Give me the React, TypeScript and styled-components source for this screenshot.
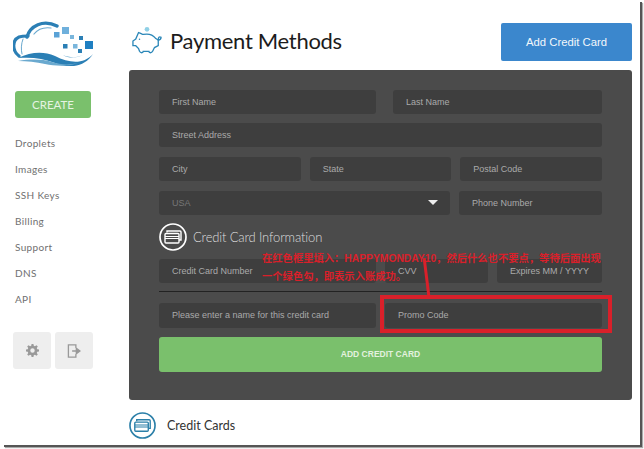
import React from 'react';
import styled, {createGlobalStyle} from 'styled-components';

const GlobalStyle = createGlobalStyle`
  html, body {
    margin: 0;
    padding: 0;
    background: #fff;
  }
`
const Page = styled.div`
  position: relative;
  width: 644px;
  height: 449px;
  overflow: hidden;
  background: #fff;
`
const Frame = styled.div`
  display: flex;
  width: 636px;
  height: 443px;
  margin: 2px 0 0 4px;
  background: #fff;
  border-right: 2px solid #555;
  border-bottom: 2px solid #555;
  box-shadow: 1px 1px 1px #aaa;
  overflow: hidden;
  font-family: "Lato", sans-serif;
`
const Sidebar = styled.aside`
  width: 125px;
  flex: none;
  display: flex;
  flex-direction: column;
  padding: 18px 0 0 9px;
  box-sizing: border-box;
`
const LogoMark = styled.svg`
  width: 82px;
  height: 46px;
  display: block;
`
const CreateButton = styled.div`
  width: 76px;
  height: 27.5px;
  margin: 24.5px 0 0 2px;
  border-radius: 3px;
  background: #7ac06c;
  color: #e6f3e2;
  font-size: 11.5px;
  line-height: 27.5px;
  text-align: center;
`
const Nav = styled.nav`
  display: flex;
  flex-direction: column;
  margin: 12px 0 0 2px;
`
const NavItem = styled.div`
  height: 26px;
  line-height: 26px;
  font-size: 10px;
  letter-spacing: 0.35px;
  color: #707070;
`
const ToolRow = styled.div`
  display: flex;
  gap: 4px;
  margin-top: 20px;
`
const ToolButton = styled.div`
  width: 38px;
  height: 37px;
  border-radius: 3px;
  background: #eee;
  color: #999;
  display: flex;
  align-items: center;
  justify-content: center;
`
const Main = styled.main`
  width: 503px;
  flex: none;
  display: flex;
  flex-direction: column;
`
const Header = styled.header`
  height: 68px;
  display: flex;
  align-items: flex-start;
  justify-content: space-between;
`
const TitleGroup = styled.div`
  display: flex;
  align-items: center;
  gap: 7px;
  margin: 22px 0 0 2px;
`
const Title = styled.h1`
  margin: 0;
  font-size: 22px;
  font-weight: 400;
  letter-spacing: -0.3px;
  line-height: 34px;
  color: #1c1c1c;
`
const AddButton = styled.div`
  width: 131px;
  height: 38px;
  margin-top: 21px;
  border-radius: 2px;
  background: #3b87cd;
  color: #f2f7fb;
  font-family: "Liberation Sans", sans-serif;
  font-size: 11.3px;
  line-height: 38px;
  text-align: center;
`
const Panel = styled.section`
  height: 330px;
  box-sizing: border-box;
  padding: 19.5px 30px 0;
  border-radius: 3px;
  background: #4b4b4b;
  display: flex;
  flex-direction: column;
`
const Row = styled.div<{$columns: string; $bottom: number; $gap?: number}>`
  display: grid;
  grid-template-columns: ${p => p.$columns};
  column-gap: ${p => p.$gap || 9}px;
  margin-bottom: ${p => p.$bottom}px;
`
const Field = styled.div<{$height?: number; $centered?: boolean; $muted?: boolean}>`
  height: ${p => p.$height || 24}px;
  line-height: ${p => p.$height || 24}px;
  padding-left: ${p => p.$centered ? 0 : 13}px;
  border-radius: 3px;
  background: #3e3e3e;
  color: ${p => p.$muted ? '#777' : '#aaa'};
  font-family: "Liberation Sans", sans-serif;
  font-size: 9px;
  text-align: ${p => p.$centered ? 'center' : 'left'};
`
const SelectField = styled(Field)`
  display: flex;
  align-items: center;
  justify-content: space-between;
  padding-right: 12px;
`
const Caret = styled.span`
  width: 0;
  height: 0;
  border-left: 5px solid transparent;
  border-right: 5px solid transparent;
  border-top: 5px solid #eee;
`
const SectionHead = styled.div`
  display: flex;
  align-items: center;
  gap: 6px;
  height: 28px;
  margin: 8.4px 0 8.5px;
  color: #ddd;
  font-size: 13px;
  font-weight: 300;
  letter-spacing: -0.15px;
`
const Divider = styled.div`
  height: 1px;
  background: #222;
  margin: 8px 0 10.5px;
`
const Submit = styled.div`
  height: 35px;
  margin-top: 9px;
  border-radius: 3px;
  background: #7ac06c;
  color: #e3f1df;
  font-family: "Liberation Sans", sans-serif;
  font-size: 8.5px;
  font-weight: 700;
  line-height: 35px;
  text-align: center;
`
const CardsHead = styled.div`
  display: flex;
  align-items: center;
  gap: 11px;
  margin-top: 12px;
  color: #333;
  font-size: 12.5px;
`
const RedBox = styled.div`
  position: absolute;
  left: 380px;
  top: 295px;
  width: 224px;
  height: 30px;
  border: 4px solid #d9202a;
`
const RedLine = styled.div`
  position: absolute;
  left: 425px;
  top: 258px;
  width: 3px;
  height: 38px;
  background: #d9202a;
  transform: rotate(-7deg);
`
const RedNote = styled.div`
  position: absolute;
  left: 262px;
  top: 250px;
  color: #d9202a;
  font-family: "Liberation Sans", "Noto Sans CJK SC", sans-serif;
  font-size: 10.3px;
  font-weight: 700;
  line-height: 18px;
  white-space: nowrap;
`

const Logo = () => (
    <LogoMark viewBox="0 0 82 46">
        <g fill="none" stroke="#2b7fb5" strokeLinecap="round">
            <path d="M6 36C-1 31 -1 20 6 17c3-1 6-1 9-1" strokeWidth="3.2"/>
            <path d="M14 17C17 6 30-1 44 6" strokeWidth="3.4"/>
            <path d="M21 14C25 9 31 7 38 8" strokeWidth="1.2" stroke="#6aa9cf"/>
            <path d="M10 19C8 24 8 30 9 34" strokeWidth="1" stroke="#6aa9cf"/>
        </g>
        <path d="M5 38c13-6 25-7 37-2 14 7 28 9 38-2-8 13-24 15-38 9-12-5-24-6-37-5z" fill="#2b7fb5"/>
        <path d="M5 41c12-2 24-2 34 1 9 3 18 3 26 1-11 4-23 3-33 1-9-2-18-3-27-3z" fill="#6aa9cf"/>
        <path d="M50 35c7 3 15 3 22-1-6 4-16 5-22 1z" fill="#6aa9cf"/>
        <rect x="49" y="7" width="7" height="7" fill="#6fb0dc"/>
        <rect x="41" y="12" width="5.5" height="5.5" fill="#5aa2d6"/>
        <rect x="57" y="15" width="4" height="4" fill="#7ab6dc"/>
        <rect x="66" y="16" width="4" height="4" fill="#2b7fb5"/>
        <rect x="72" y="21" width="8" height="8" fill="#1f7fc2"/>
        <rect x="50" y="24" width="4.5" height="4.5" fill="#2b7fb5"/>
        <rect x="60" y="24" width="4.5" height="4.5" fill="#7ab6dc"/>
        <rect x="65" y="29" width="4" height="4" fill="#2b7fb5"/>
    </LogoMark>
)

const Piggy = () => (
    <svg width="32" height="30" viewBox="0 0 34 32" fill="none" stroke="#2b87b8" strokeWidth="1.4">
        <circle cx="17" cy="3.5" r="2.5" fill="#8fd0e6" stroke="none"/>
        <path d="M8 7c3 1 4 2 5 2 5-1 10 0 13 4l3 2v6l-4 2-2 4c-1 2-4 2-4 0h-6c0 2-3 2-4 0l-1-3-3-3H2v-5l3-2z"/>
        <path d="M29 15c2 0 3-1 3-3-2-1-3 0-3 3z"/>
        <circle cx="9" cy="14" r="0.8" fill="#2b87b8" stroke="none"/>
    </svg>
)

const CardIcon = ({color, size}: {color: string; size: number}) => (
    <svg width={size} height={size} viewBox="0 0 28 28" fill="none" stroke={color}>
        <circle cx="14" cy="14" r="13" strokeWidth="1.7"/>
        <path d="M8 9.5V8h13a1 1 0 0 1 1 1v8h-2" strokeWidth="1.4"/>
        <rect x="6" y="10.5" width="14" height="9.5" rx="1" strokeWidth="1.4"/>
        <path d="M6 13.5h14M6 15.5h14" strokeWidth="1.1"/>
    </svg>
)

const navItems = ['Droplets', 'Images', 'SSH Keys', 'Billing', 'Support', 'DNS', 'API']

const App = () => {
    return (
        <Page>
            <GlobalStyle/>
            <Frame>
                <Sidebar>
                    <Logo/>
                    <CreateButton>CREATE</CreateButton>
                    <Nav>
                        {navItems.map(item => <NavItem key={item}>{item}</NavItem>)}
                    </Nav>
                    <ToolRow>
                        <ToolButton>
                            <svg width="13" height="13" viewBox="0 0 14 14" fill="#999">
                                <path fillRule="evenodd" d="M6 0h2l.4 1.9 1.2.5L11.3 1.3l1.4 1.4-1.1 1.7.5 1.2 1.9.4v2l-1.9.4-.5 1.2 1.1 1.7-1.4 1.4-1.7-1.1-1.2.5L8 14H6l-.4-1.9-1.2-.5-1.7 1.1-1.4-1.4 1.1-1.7-.5-1.2L0 8V6l1.9-.4.5-1.2-1.1-1.7 1.4-1.4 1.7 1.1 1.2-.5zM7 4.6a2.4 2.4 0 1 0 0 4.8 2.4 2.4 0 0 0 0-4.8z"/>
                            </svg>
                        </ToolButton>
                        <ToolButton>
                            <svg width="14" height="14" viewBox="0 0 14 15" fill="none" stroke="#999" strokeWidth="1.4">
                                <path d="M9 4V1H1v13h8v-3"/>
                                <path d="M5 7.5h5M9.5 4.5l4 3-4 3z" fill="#999"/>
                            </svg>
                        </ToolButton>
                    </ToolRow>
                </Sidebar>
                <Main>
                    <Header>
                        <TitleGroup>
                            <Piggy/>
                            <Title>Payment Methods</Title>
                        </TitleGroup>
                        <AddButton>Add Credit Card</AddButton>
                    </Header>
                    <Panel>
                        <Row $columns="217px 209px" $bottom={9.7} $gap={17}>
                            <Field>First Name</Field>
                            <Field>Last Name</Field>
                        </Row>
                        <Row $columns="1fr" $bottom={9.7}>
                            <Field>Street Address</Field>
                        </Row>
                        <Row $columns="1fr 1fr 1fr" $bottom={9.7}>
                            <Field>City</Field>
                            <Field>State</Field>
                            <Field>Postal Code</Field>
                        </Row>
                        <Row $columns="291px 1fr" $bottom={0}>
                            <SelectField $muted>USA<Caret/></SelectField>
                            <Field>Phone Number</Field>
                        </Row>
                        <SectionHead>
                            <CardIcon color="#fff" size={28}/>
                            Credit Card Information
                        </SectionHead>
                        <Row $columns="217px 103px 1fr" $bottom={0}>
                            <Field>Credit Card Number</Field>
                            <Field>CVV</Field>
                            <Field $centered>Expires MM / YYYY</Field>
                        </Row>
                        <Divider/>
                        <Row $columns="217px 1fr" $bottom={0}>
                            <Field $height={25}>Please enter a name for this credit card</Field>
                            <Field $height={25}>Promo Code</Field>
                        </Row>
                        <Submit>ADD CREDIT CARD</Submit>
                    </Panel>
                    <CardsHead>
                        <CardIcon color="#2b7fa8" size={27}/>
                        Credit Cards
                    </CardsHead>
                </Main>
            </Frame>
            <RedLine/>
            <RedBox/>
            <RedNote>
                在红色框里填入：HAPPYMONDAY10，然后什么也不要点，等待后面出现<br/>
                一个绿色勾，即表示入账成功。
            </RedNote>
        </Page>
    );
};

export default App;
